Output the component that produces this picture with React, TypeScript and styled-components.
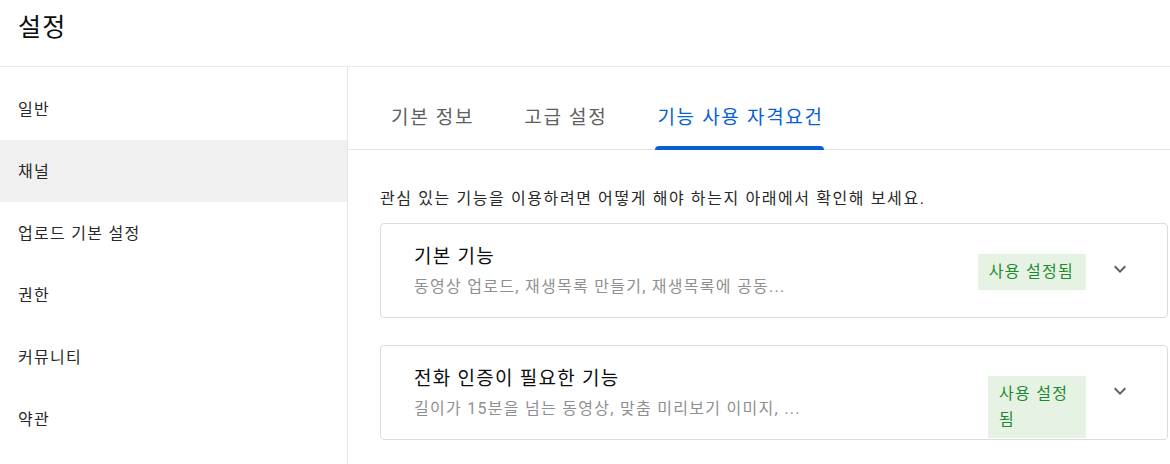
import React from "react";
import styled, { createGlobalStyle } from "styled-components";

const GlobalStyle = createGlobalStyle`
	html, body {
		margin: 0;
		padding: 0;
		background: #fff;
	}
	body {
		font-family: Roboto, "Noto Sans CJK KR", "Noto Sans", sans-serif;
		letter-spacing: 0.08em;
		color: #0d0d0d;
		overflow: hidden;
	}
`;

const Page = styled.div`
	display: flex;
	flex-direction: column;
	width: 1170px;
	height: 464px;
	overflow: hidden;
`;

const Header = styled.header`
	display: flex;
	align-items: flex-start;
	height: 67px;
	padding: 7px 0 0 18px;
	border-bottom: 1px solid #ececec;
	box-sizing: border-box;
	flex-shrink: 0;
`;

const Title = styled.h1`
	margin: 0;
	font-size: 25px;
	font-weight: 400;
	color: #0d0d0d;
`;

const Body = styled.div`
	display: flex;
	flex: 1;
	min-height: 0;
`;

const Sidebar = styled.nav`
	width: 348px;
	flex-shrink: 0;
	padding-top: 11px;
	border-right: 1px solid #e5e5e5;
	box-sizing: border-box;
`;

const NavItem = styled.div<{ $active?: boolean }>`
	display: flex;
	align-items: center;
	height: 62px;
	padding: 0 0 3px 18px;
	box-sizing: border-box;
	font-size: 16px;
	color: #282828;
	background: ${({ $active }) => ($active ? "#f0f0f0" : "transparent")};
`;

const Main = styled.main`
	flex: 1;
	min-width: 0;
	display: flex;
	flex-direction: column;
`;

const TabBar = styled.div`
	display: flex;
	align-items: stretch;
	gap: 48px;
	height: 83px;
	padding: 15px 0 0 41px;
	border-bottom: 1px solid #e5e5e5;
	box-sizing: border-box;
`;

const Tab = styled.div<{ $active?: boolean }>`
	position: relative;
	display: flex;
	align-items: center;
	padding: 0 0 0 2px;
	font-size: 19px;
	letter-spacing: 0.09em;
	color: ${({ $active }) => ($active ? "#065fd4" : "#606060")};

	&::after {
		content: "";
		display: ${({ $active }) => ($active ? "block" : "none")};
		position: absolute;
		left: 0;
		right: 0;
		bottom: -1px;
		height: 4px;
		border-radius: 4px 4px 0 0;
		background: #065fd4;
	}
`;

const Content = styled.div`
	display: flex;
	flex-direction: column;
	gap: 27px;
	padding: 35px 2px 0 32px;
`;

const Intro = styled.p`
	margin: 0 0 -13px;
	font-size: 16px;
	letter-spacing: 0.1em;
	color: #282828;
`;

const Card = styled.section`
	display: flex;
	align-items: flex-start;
	min-height: 95px;
	padding: 16px 35px 0 33px;
	border: 1px solid #dcdcdc;
	border-radius: 4px;
	box-sizing: border-box;
`;

const CardText = styled.div`
	flex: 1;
	min-width: 0;
	display: flex;
	flex-direction: column;
	gap: 5px;
	padding-top: 1px;
`;

const CardTitle = styled.div`
	font-size: 19px;
	color: #0d0d0d;
`;

const CardSub = styled.div`
	font-size: 16px;
	color: #8f8f8f;
	white-space: nowrap;
`;

const Badge = styled.div<{ $width?: number }>`
	margin: 14px 22px 0 24px;
	padding: 5px 12px 5px 11px;
	max-width: ${({ $width }) => ($width ? `${$width}px` : "none")};
	box-sizing: border-box;
	background: #e6f2e4;
	color: #1e8a2e;
	font-size: 16px;
	line-height: 26px;
`;

const Chevron = styled.svg`
	flex-shrink: 0;
	margin-top: 17px;
	width: 24px;
	height: 24px;
`;

const navItems = ["일반", "채널", "업로드 기본 설정", "권한", "커뮤니티", "약관"];
const tabs = ["기본 정보", "고급 설정", "기능 사용 자격요건"];

const features = [
	{ title: "기본 기능", sub: "동영상 업로드, 재생목록 만들기, 재생목록에 공동...", badgeWidth: 0 },
	{ title: "전화 인증이 필요한 기능", sub: "길이가 15분을 넘는 동영상, 맞춤 미리보기 이미지, ...", badgeWidth: 98 },
];

export default function App() {
	return (
		<Page>
			<GlobalStyle />
			<Header>
				<Title>설정</Title>
			</Header>
			<Body>
				<Sidebar>
					{navItems.map((item) => (
						<NavItem key={item} $active={item === "채널"}>
							{item}
						</NavItem>
					))}
				</Sidebar>
				<Main>
					<TabBar>
						{tabs.map((tab, i) => (
							<Tab key={tab} $active={i === 2}>
								{tab}
							</Tab>
						))}
					</TabBar>
					<Content>
						<Intro>관심 있는 기능을 이용하려면 어떻게 해야 하는지 아래에서 확인해 보세요.</Intro>
						{features.map((f) => (
							<Card key={f.title}>
								<CardText>
									<CardTitle>{f.title}</CardTitle>
									<CardSub>{f.sub}</CardSub>
								</CardText>
								<Badge $width={f.badgeWidth || undefined}>사용 설정됨</Badge>
								<Chevron viewBox="0 0 24 24">
									<path d="M16.59 8.59L12 13.17 7.41 8.59 6 10l6 6 6-6z" fill="#606060" />
								</Chevron>
							</Card>
						))}
					</Content>
				</Main>
			</Body>
		</Page>
	);
}
